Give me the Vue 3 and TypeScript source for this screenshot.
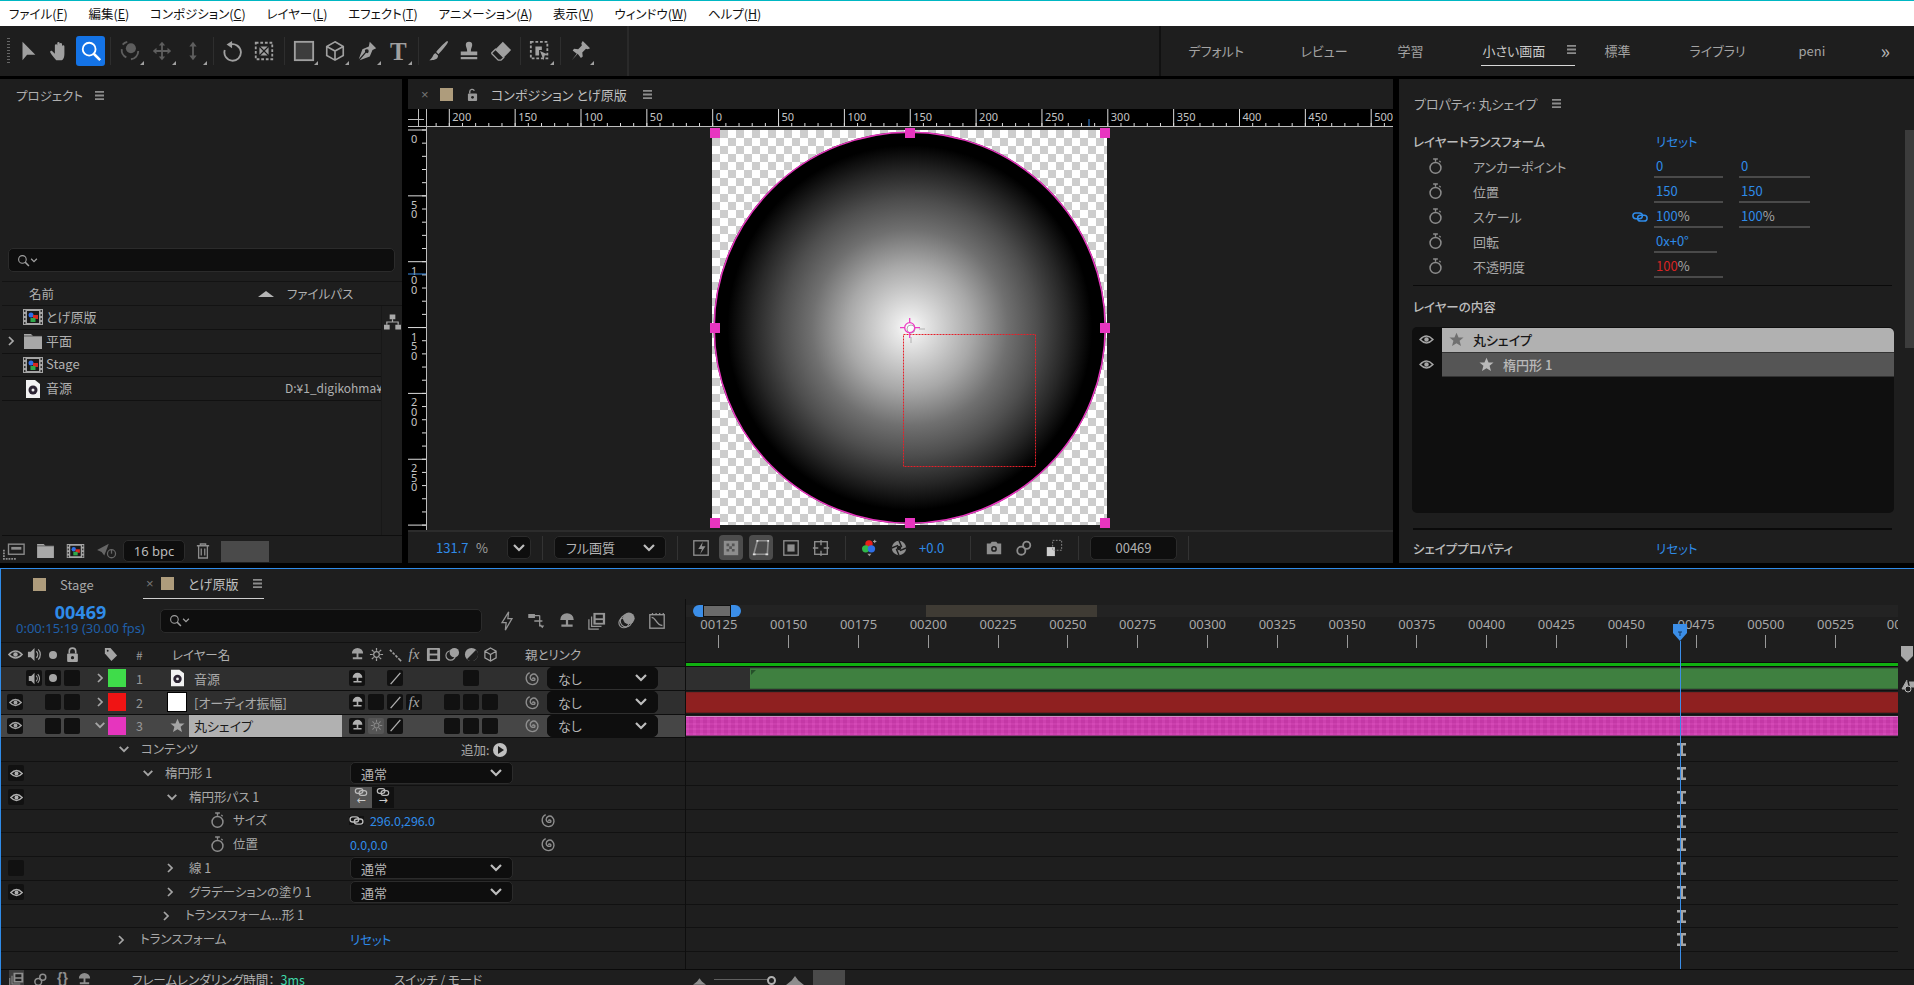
<template>
  <div class="app">
    <svg class="defs" aria-hidden="true">
      <symbol id="arrow" viewBox="0 0 24 24"><path d="M6 2v20l5-6h9z" fill="currentColor"/></symbol>
      <symbol id="hand" viewBox="0 0 24 24"><path d="M9 22c-2-2-5-6-6.500-8.500-.7-1.300 1-2.500 2.200-1.300L7.500 15V6a1.300 1.300 0 0 1 2.600 0v5V3.500a1.300 1.300 0 0 1 2.600 0V11V4.500a1.300 1.300 0 0 1 2.600 0V12V7a1.300 1.300 0 0 1 2.600 0v8c0 3-1 7-3 7z" fill="currentColor"/></symbol>
      <symbol id="search" viewBox="0 0 24 24"><circle cx="10" cy="10" r="7" fill="none" stroke="currentColor" stroke-width="2"/><path d="M15 15l7 7" stroke="currentColor" stroke-width="2.800"/></symbol>
      <symbol id="orbit" viewBox="0 0 24 24"><circle cx="13" cy="9" r="5.500" fill="currentColor"/><path d="M3 10a9 9 0 0 0 5 9M21 12a9 9 0 0 1-8 9M4 5a9 9 0 0 1 5-3" fill="none" stroke="currentColor" stroke-width="2"/></symbol>
      <symbol id="move4" viewBox="0 0 24 24"><path d="M12 2l3.500 4H13v5h5V8.500l4 3.500-4 3.500V13h-5v5h2.500L12 22l-3.500-4H11v-5H6v2.500L2 12l4-3.500V11h5V6H8.500z" fill="currentColor"/></symbol>
      <symbol id="updown" viewBox="0 0 24 24"><path d="M12 2l4 5h-3v10h3l-4 5-4-5h3V7H8z" fill="currentColor"/></symbol>
      <symbol id="undo" viewBox="0 0 24 24"><path d="M9 5a9 9 0 1 1-6 6" fill="none" stroke="currentColor" stroke-width="2"/><path d="M11 1v8L5 5z" fill="currentColor"/></symbol>
      <symbol id="pan" viewBox="0 0 24 24"><rect x="3" y="3" width="18" height="18" fill="none" stroke="currentColor" stroke-width="2" stroke-dasharray="3 2"/><path d="M8 7h8l-4 4zM8 17h8l-4-4zM7 8v8l4-4zM17 8v8l-4-4z" fill="currentColor"/></symbol>
      <symbol id="rect" viewBox="0 0 24 24"><rect x="2" y="2" width="20" height="20" fill="#3d3d3d" stroke="currentColor" stroke-width="2"/></symbol>
      <symbol id="cube" viewBox="0 0 24 24"><path d="M12 2l9 5v10l-9 5-9-5V7zM3 7l9 5 9-5M12 12v10" fill="none" stroke="currentColor" stroke-width="1.800"/></symbol>
      <symbol id="pen" viewBox="0 0 24 24"><path d="M15 2l7 7-4 2-3 7-11 4 7-8a2 2 0 1 0-1-1l-7 8 4-11 7-3z" fill="currentColor"/></symbol>
      <symbol id="brush" viewBox="0 0 24 24"><path d="M22 1c-3 2-9 8-12 12l2.500 2.500C16 12 22 5 23 2zM9.500 14.500c-3 0-2.500 5-7 7.500 5 .5 10-1 9.500-5z" fill="currentColor"/></symbol>
      <symbol id="stamp" viewBox="0 0 24 24"><path d="M8.500 5.500a3.500 3.500 0 1 1 7 0c0 2-1.500 3.500-1.500 7h7v4H3v-4h7c0-3.500-1.500-5-1.500-7zM3 18.500h18V21H3z" fill="currentColor"/></symbol>
      <symbol id="eraser" viewBox="0 0 24 24"><path d="M14 2l9 9-8 8-9-9z" fill="currentColor"/><path d="M6 10l9 9-3 3-3 0-7-7 0-1z" fill="none" stroke="currentColor" stroke-width="1.500"/></symbol>
      <symbol id="roto" viewBox="0 0 24 24"><rect x="2" y="2" width="18" height="18" fill="none" stroke="currentColor" stroke-width="2" stroke-dasharray="3 2"/><path d="M7 7h7v4h-3v6H7z" fill="currentColor"/><path d="M12 12l9 4-4 1-1 5z" fill="currentColor"/></symbol>
      <symbol id="pin" viewBox="0 0 24 24"><path d="M15 1l8 8-2.500 1-2-.5-4 4 .5 4.500-2 1.500-3.500-4.500L3 22l5.500-7L4 11.500 5.500 9.500 10 10l4-4-.5-2.500z" fill="currentColor"/></symbol>
      <symbol id="menu" viewBox="0 0 12 10"><path d="M1 0h10v2H1zM1 4h10v2H1zM1 8h10v2H1z" fill="currentColor"/></symbol>
      <symbol id="lock-open" viewBox="0 0 12 14"><path d="M3 6V4a2.600 2.600 0 0 1 5-1" fill="none" stroke="currentColor" stroke-width="1.500"/><rect x="1" y="6" width="10" height="8" rx="1" fill="currentColor"/><circle cx="6" cy="10" r="1.500" fill="#1e1e1e"/></symbol>
      <symbol id="lock" viewBox="0 0 12 14"><path d="M3 6V4a3 3 0 0 1 6 0v2" fill="none" stroke="currentColor" stroke-width="1.500"/><rect x="1" y="6" width="10" height="8" rx="1" fill="currentColor"/><circle cx="6" cy="10" r="1.500" fill="#1e1e1e"/></symbol>
      <symbol id="watch" viewBox="0 0 16 18"><path d="M5.500 1h5M8 1v3" stroke="currentColor" stroke-width="1.500"/><path d="M12 3l1.500 1.500" stroke="currentColor" stroke-width="1.300"/><circle cx="8" cy="10.500" r="5.800" fill="none" stroke="currentColor" stroke-width="1.600"/></symbol>
      <symbol id="link" viewBox="0 0 16 10"><rect x=".9" y=".9" width="9.500" height="5.800" rx="2.900" fill="none" stroke="currentColor" stroke-width="1.500"/><rect x="5.600" y="3.300" width="9.500" height="5.800" rx="2.900" fill="none" stroke="currentColor" stroke-width="1.500"/></symbol>
      <symbol id="eye" viewBox="0 0 16 12"><path d="M1 6q7-7.500 14 0q-7 7.500-14 0z" fill="none" stroke="currentColor" stroke-width="1.700"/><circle cx="8" cy="6" r="2.400" fill="currentColor"/></symbol>
      <symbol id="star" viewBox="0 0 16 16"><path d="M8 .8l2.200 5h5.300l-4.200 3.500 1.500 5.700L8 12l-4.800 3 1.500-5.700L.5 5.800h5.300z" fill="currentColor"/></symbol>
      <symbol id="right" viewBox="0 0 10 14"><path d="M2.500 2l5 5-5 5" fill="none" stroke="currentColor" stroke-width="2.200"/></symbol>
      <symbol id="down" viewBox="0 0 14 10"><path d="M2 2l5 5 5-5" fill="none" stroke="currentColor" stroke-width="2.200"/></symbol>
      <symbol id="speaker" viewBox="0 0 16 16"><path d="M1 5h3l4-4v14l-4-4H1z" fill="currentColor"/><path d="M10 4.500a5 5 0 0 1 0 7M12 2.500a8 8 0 0 1 0 11" fill="none" stroke="currentColor" stroke-width="1.300"/></symbol>
      <symbol id="tag" viewBox="0 0 16 16"><path d="M2 1h6l7 8-6 6-7-8z" fill="currentColor"/><circle cx="5" cy="4" r="1" fill="#1e1e1e"/></symbol>
      <symbol id="shy" viewBox="0 0 16 16"><path d="M2 7a6 6 0 0 1 12 0H9v4h4v2H3v-2h4V7z" fill="currentColor"/></symbol>
      <symbol id="sun" viewBox="0 0 16 16"><circle cx="8" cy="8" r="3" fill="none" stroke="currentColor" stroke-width="1.300"/><path d="M8 1v3M8 12v3M1 8h3M12 8h3M3 3l2 2M11 11l2 2M13 3l-2 2M5 11l-2 2" stroke="currentColor" stroke-width="1.300"/></symbol>
      <symbol id="slash" viewBox="0 0 16 16"><path d="M14 1L2 15" stroke="currentColor" stroke-width="1.600"/></symbol>
      <symbol id="steps" viewBox="0 0 16 16"><path d="M2 3l2 2M5 6l2 2M8 9l2 2M11 12l3 3" stroke="currentColor" stroke-width="1.700"/></symbol>
      <symbol id="film" viewBox="0 0 16 16"><rect x="1" y="1" width="14" height="14" rx="1" fill="currentColor"/><rect x="4" y="3" width="8" height="4" fill="#1e1e1e"/><rect x="4" y="9" width="8" height="4" fill="#1e1e1e"/></symbol>
      <symbol id="layers" viewBox="0 0 16 16"><circle cx="10" cy="6" r="5" fill="currentColor"/><circle cx="6" cy="9" r="5" fill="none" stroke="currentColor" stroke-width="1.200"/></symbol>
      <symbol id="half" viewBox="0 0 16 16"><circle cx="8" cy="8" r="7" fill="currentColor"/><path d="M13 3L3 13a7 7 0 0 0 10-10z" fill="#1e1e1e"/></symbol>
      <symbol id="cube2" viewBox="0 0 16 16"><path d="M8 1l6 3.500v7L8 15l-6-3.500v-7zM2 4.500L8 8l6-3.500M8 8v7" fill="none" stroke="currentColor" stroke-width="1.300"/></symbol>
      <symbol id="spiral" viewBox="0 0 16 18"><path d="M8 9.500a1.300 1.300 0 1 1 1.800 1.400 3.400 3.400 0 0 1-4.300-3 3.800 3.800 0 0 1 6.600-2.400 6 6 0 0 1-.6 9A6.800 6.800 0 0 1 1.300 9.500 7 7 0 0 1 5 2.800" fill="none" stroke="currentColor" stroke-width="1.500"/></symbol>
      <symbol id="bolt" viewBox="0 0 16 24"><path d="M10 1L2 14h5l-1 9 8-14H9z" fill="none" stroke="currentColor" stroke-width="1.500"/></symbol>
      <symbol id="tree" viewBox="0 0 20 20"><path d="M1 3h6v3H1zM7 4h6M13 4v12M7 10h9M13 15h2" stroke="currentColor" stroke-width="1.400" fill="currentColor"/><path d="M13 15h5l-2 3z" fill="currentColor"/></symbol>
      <symbol id="stack" viewBox="0 0 20 20"><rect x="6" y="1" width="13" height="13" fill="currentColor"/><rect x="8.500" y="3" width="8" height="4" fill="#1e1e1e"/><rect x="8.500" y="9" width="8" height="3" fill="#1e1e1e"/><path d="M4 5v11h11M1 8v11h11" fill="none" stroke="currentColor" stroke-width="1.400"/></symbol>
      <symbol id="motion" viewBox="0 0 20 20"><circle cx="12" cy="7" r="6.500" fill="currentColor"/><circle cx="9" cy="10" r="6.500" fill="none" stroke="currentColor" stroke-width="1.300"/><circle cx="6.500" cy="12" r="5.500" fill="none" stroke="currentColor" stroke-width="1.300"/></symbol>
      <symbol id="graph" viewBox="0 0 20 20"><rect x="2" y="3" width="16" height="15" fill="none" stroke="currentColor" stroke-width="1.500"/><path d="M4 6c5 0 5 9 12 9M5 1v2M9 1v2M13 1v2M17 1v2" fill="none" stroke="currentColor" stroke-width="1.400"/></symbol>
      <symbol id="snap" viewBox="0 0 20 20"><rect x="2" y="2" width="16" height="16" fill="none" stroke="currentColor" stroke-width="1.500"/><path d="M12 3l-5 8h4l-2 6 6-9h-4z" fill="currentColor"/></symbol>
      <symbol id="grid" viewBox="0 0 20 20"><rect x="2" y="2" width="16" height="16" fill="#8d8d8d"/><path d="M5 5h3v3H5zM11 5h3v3h-3zM8 8h3v3H8zM5 11h3v3H5zM11 11h3v3h-3z" fill="#555"/></symbol>
      <symbol id="mask" viewBox="0 0 20 20"><path d="M6 2h12l-1 15H2z" fill="none" stroke="currentColor" stroke-width="1.800"/><path d="M6 1v2M18 1v2M1 17h3M15 17h3" stroke="#ddd" stroke-width="2"/></symbol>
      <symbol id="safe" viewBox="0 0 20 20"><rect x="2" y="2" width="16" height="16" fill="none" stroke="currentColor" stroke-width="1.500"/><rect x="6" y="6" width="8" height="8" fill="currentColor"/></symbol>
      <symbol id="target" viewBox="0 0 20 20"><rect x="3" y="3" width="14" height="14" fill="none" stroke="currentColor" stroke-width="1.500"/><path d="M10 1v6M10 13v6M1 10h6M13 10h6" stroke="currentColor" stroke-width="1.500"/></symbol>
      <symbol id="rgb" viewBox="0 0 20 22"><circle cx="10" cy="6" r="4.500" fill="#e8201a"/><circle cx="6" cy="12" r="4.500" fill="#2fb84a"/><circle cx="13" cy="12" r="4.500" fill="#2f6fe8"/><path d="M15 3h4M17 1v4" stroke="#aaa" stroke-width="1.200"/><path d="M8 18h5l-2.500 3z" fill="#999"/></symbol>
      <symbol id="shutter" viewBox="0 0 20 20"><circle cx="10" cy="10" r="8" fill="currentColor"/><path d="M10 2l3 7M18 10l-7 3M10 18l-3-7M2 10l7-3" stroke="#1e1e1e" stroke-width="1.600"/><circle cx="10" cy="10" r="2.500" fill="#1e1e1e"/></symbol>
      <symbol id="camera" viewBox="0 0 20 20"><path d="M2 5h4l1.500-2h5L14 5h4v12H2z" fill="currentColor"/><circle cx="10" cy="11" r="3.200" fill="#1e1e1e"/><circle cx="10" cy="11" r="1.500" fill="currentColor"/></symbol>
      <symbol id="viewer" viewBox="0 0 20 20"><circle cx="7" cy="13" r="4.500" fill="none" stroke="currentColor" stroke-width="2"/><circle cx="13" cy="7" r="4" fill="none" stroke="currentColor" stroke-width="2"/></symbol>
      <symbol id="channel" viewBox="0 0 20 20"><rect x="2" y="9" width="9" height="10" fill="#cfcfcf"/><rect x="8.500" y="1.500" width="10" height="11" fill="none" stroke="#8d8d8d" stroke-dasharray="2 1.500"/></symbol>
      <symbol id="comp" viewBox="0 0 20 16"><rect width="20" height="16" fill="#a5a5a5"/><path d="M1 1h1.500v2H1zM1 5h1.500v2H1zM1 9h1.500v2H1zM1 13h1.500v2H1zM17.500 1H19v2h-1.500zM17.500 5H19v2h-1.500zM17.500 9H19v2h-1.500zM17.500 13H19v2h-1.500z" fill="#333"/><rect x="4" y="2" width="12" height="12" fill="#1a1a1a"/><rect x="5.500" y="3.500" width="5" height="5" rx="2.500" fill="#2f6fe8"/><rect x="10" y="6" width="5" height="4" fill="#d8281f"/><rect x="7.500" y="9" width="5" height="4" fill="#2fa84a"/></symbol>
      <symbol id="doc" viewBox="0 0 14 18"><path d="M0 0h9l5 4v14H0z" fill="#f2f2f2"/><circle cx="7" cy="10" r="4.500" fill="#2c2433"/><circle cx="7" cy="10" r="1.500" fill="#eee"/></symbol>
      <symbol id="folder" viewBox="0 0 18 15"><path d="M0 0h7l2 2h9v13H0z" fill="#a8a8a8"/><path d="M0 2h18" stroke="#333" stroke-width=".700"/></symbol>
      <symbol id="net" viewBox="0 0 18 16"><path d="M6 0h6v5H6zM0 11h6v5H0zM12 11h6v5h-6z" fill="currentColor"/><path d="M9 5v3M3 11V8h12v3" fill="none" stroke="currentColor" stroke-width="1.300"/></symbol>
      <symbol id="footage" viewBox="0 0 24 18"><rect x="6" y="1" width="17" height="11" fill="none" stroke="currentColor" stroke-width="1.500"/><rect x="9" y="4" width="11" height="3" fill="currentColor"/><path d="M1 7v10h14" fill="none" stroke="currentColor" stroke-width="2" stroke-dasharray="2 1"/></symbol>
      <symbol id="rocket" viewBox="0 0 24 20"><path d="M1 9l13-7-5 13-3-4z" fill="currentColor"/><circle cx="17" cy="13" r="4.500" fill="none" stroke="currentColor" stroke-width="1.400"/><path d="M17 8v5" stroke="currentColor" stroke-width="1.400"/></symbol>
      <symbol id="trash" viewBox="0 0 16 18"><path d="M1 3h14M5 3V1h6v2M3 3v14h10V3M6 6v8M10 6v8" fill="none" stroke="currentColor" stroke-width="1.500"/></symbol>
      <symbol id="mount" viewBox="0 0 16 8"><path d="M0 8l5-4 3-4 3 4 5 4z" fill="currentColor"/></symbol>
      <symbol id="ibeam" viewBox="0 0 9 13"><path d="M0 0h9v2.500H6V10.500h3V13H0v-2.500h3V2.500H0z" fill="currentColor"/></symbol>
    </svg>

    <div class="menubar">
      <span v-for="m in menus" :key="m.key" class="menu-item">{{ m.label }}(<u>{{ m.key }}</u>)</span>
    </div>

    <div class="toolbar">
      <span class="grip"></span>
      <template v-for="(t, i) in tools" :key="i">
        <span v-if="t.sep" class="tool-sep"></span>
        <span v-else class="tool" :class="{ active: t.active, dim: t.dim, fly: t.fly }">
          <span v-if="t.text" class="tool-t">T</span>
          <svg v-else class="tool-ic"><use :href="'#' + t.id" /></svg>
        </span>
      </template>
      <span class="tool-end"></span>
      <div class="workspaces">
        <span v-for="w in workspaces" :key="w.label" class="ws" :class="{ on: w.on }" :style="{ width: w.w + 'px' }">
          {{ w.label }}
          <svg v-if="w.on" class="ham ws-ham"><use href="#menu" /></svg>
        </span>
        <span class="ws-more">»</span>
      </div>
    </div>

    <div class="panels">
      <section class="project">
        <header class="p-head"><span>プロジェクト</span><svg class="ham"><use href="#menu" /></svg></header>
        <div class="search proj-search">
          <svg class="search-ic"><use href="#search" /></svg><svg class="search-ch"><use href="#down" /></svg>
        </div>
        <div class="proj-cols">
          <span class="col-name">名前</span>
          <span class="col-sort"></span>
          <span class="col-path">ファイルパス</span>
        </div>
        <div class="proj-list">
          <div class="proj-rows">
            <div v-for="p in projectItems" :key="p.name" class="proj-row">
              <span class="proj-chev"><svg v-if="p.chev"><use href="#right" /></svg></span>
              <span class="proj-icon"><svg :class="p.icon"><use :href="'#' + p.icon" /></svg></span>
              <span class="proj-name">{{ p.name }}</span>
              <span class="proj-path">{{ p.path }}</span>
            </div>
          </div>
          <div class="proj-side"><svg class="net"><use href="#net" /></svg></div>
        </div>
        <footer class="proj-foot">
          <svg class="pf-ic footage"><use href="#footage" /></svg>
          <svg class="pf-ic folder"><use href="#folder" /></svg>
          <svg class="pf-ic comp"><use href="#comp" /></svg>
          <svg class="pf-ic rocket"><use href="#rocket" /></svg>
          <span class="bpc">16 bpc</span>
          <svg class="pf-ic trash"><use href="#trash" /></svg>
          <span class="gray-box"></span>
        </footer>
      </section>

      <section class="viewer">
        <header class="v-head">
          <span class="x">×</span>
          <span class="swatch"></span>
          <svg class="v-lock"><use href="#lock-open" /></svg>
          <span class="v-title">コンポジション とげ原版</span>
          <svg class="ham"><use href="#menu" /></svg>
        </header>
        <div class="ruler-top">
          <div class="ruler-corner"></div>
          <svg class="ruler-h" width="966" height="18">
            <line v-for="t in hMinor" :key="t" :x1="t" :x2="t" y1="14" y2="17" stroke="#ddd" />
            <template v-for="t in hMajor" :key="t.x">
              <line :x1="t.x" :x2="t.x" y1="0" y2="17" stroke="#ddd" />
              <text :x="t.x + 3" y="12" class="ruler-text">{{ t.v }}</text>
            </template>
            <line x1="662" x2="662" y1="10" y2="17" stroke="#3b8ee8" />
            <line x1="0" x2="966" y1="17.500" y2="17.500" stroke="#bdbdbd" />
          </svg>
        </div>
        <div class="v-body">
          <svg class="ruler-v" width="19" height="403">
            <line v-for="t in vMinor" :key="t" x1="14" x2="19" :y1="t" :y2="t" stroke="#ddd" />
            <template v-for="t in vMajor" :key="t.v">
              <line x1="0" x2="19" :y1="t.y" :y2="t.y" stroke="#ddd" />
              <text v-for="(d, i) in t.digits" :key="i" x="3" :y="t.y + 13 + i * 9.600" class="ruler-text">{{ d }}</text>
            </template>
            <line x1="0" x2="19" y1="147" y2="147" stroke="#3b8ee8" />
            <line x1="18.500" x2="18.500" y1="0" y2="403" stroke="#bdbdbd" />
          </svg>
          <div class="stage">
            <div class="checker">
              <svg class="art" width="395" height="395" viewBox="0 0 395 395">
                <defs>
                  <radialGradient id="glow">
                    <stop offset="0" stop-color="#fff" />
                    <stop offset="0.07" stop-color="#e8e8e8" />
                    <stop offset="0.32" stop-color="#a8a8a8" />
                    <stop offset="0.5" stop-color="#707070" />
                    <stop offset="0.65" stop-color="#4e4e4e" />
                    <stop offset="0.8" stop-color="#262626" />
                    <stop offset="0.93" stop-color="#000" />
                  </radialGradient>
                </defs>
                <circle cx="197.700" cy="197.700" r="196" fill="url(#glow)" />
                <circle cx="197.700" cy="197.700" r="195.500" fill="none" stroke="#e635be" stroke-width="1.500" />
                <rect x="191.500" y="204.500" width="132" height="132" fill="none" stroke="#e5202a" stroke-dasharray="2 1" />
                <g fill="none" stroke="#b0b0b0">
                  <circle cx="199" cy="199" r="4" />
                  <path d="M199 207v6M207 199h6" />
                </g>
                <g fill="none" stroke="#ec3fc4" stroke-width="1.300">
                  <circle cx="197.700" cy="197.700" r="5" />
                  <path d="M197.700 188v5M197.700 203v5M188 197.700h5M203 197.700h5" />
                </g>
                <rect v-for="h in handles" :key="h.x + '-' + h.y" :x="h.x - 5" :y="h.y - 5" width="10" height="10" fill="#e835c0" />
              </svg>
            </div>
          </div>
        </div>
        <footer class="v-foot">
          <span class="zoom-val">131.7</span><span class="zoom-pct">%</span>
          <span class="drop mini"><svg class="chev"><use href="#down" /></svg></span>
          <i class="sep"></i>
          <span class="drop quality">フル画質<svg class="chev"><use href="#down" /></svg></span>
          <i class="sep"></i>
          <span class="vf-group">
            <span v-for="b in viewerBtns" :key="b.id" class="vf-btn" :class="{ on: b.on }"><svg><use :href="'#' + b.id" /></svg></span>
          </span>
          <i class="sep"></i>
          <span class="vf-group">
            <span class="vf-btn"><svg><use href="#rgb" /></svg></span>
            <span class="vf-btn"><svg><use href="#shutter" /></svg></span>
          </span>
          <span class="exposure">+0.0</span>
          <i class="sep"></i>
          <span class="vf-group">
            <span class="vf-btn"><svg><use href="#camera" /></svg></span>
            <span class="vf-btn"><svg><use href="#viewer" /></svg></span>
            <span class="vf-btn"><svg><use href="#channel" /></svg></span>
          </span>
          <i class="sep"></i>
          <span class="frame-box">00469</span>
          <i class="sep"></i>
        </footer>
      </section>

      <section class="props">
        <header class="pr-head"><span>プロパティ: 丸シェイプ</span><svg class="ham"><use href="#menu" /></svg></header>
        <div class="pr-title"><span>レイヤートランスフォーム</span><a class="reset">リセット</a></div>
        <div v-for="r in transformRows" :key="r.label" class="pr-row">
          <svg class="pr-watch"><use href="#watch" /></svg>
          <span class="pr-label">{{ r.label }}</span>
          <span class="pr-link"><svg v-if="r.link"><use href="#link" /></svg></span>
          <span class="pr-val" :class="{ short: r.short }"><em :class="{ red: r.red }">{{ r.a }}</em>{{ r.unit }}</span>
          <span v-if="r.b" class="pr-val second"><em>{{ r.b }}</em>{{ r.unit }}</span>
        </div>
        <div class="pr-div"></div>
        <div class="pr-title content-title"><span>レイヤーの内容</span></div>
        <div class="content-box">
          <div class="content-row first">
            <svg class="c-eye"><use href="#eye" /></svg>
            <div class="c-bar"><svg class="c-star"><use href="#star" /></svg><span>丸シェイプ</span></div>
          </div>
          <div class="content-row second">
            <svg class="c-eye"><use href="#eye" /></svg>
            <div class="c-bar"><svg class="c-star"><use href="#star" /></svg><span>楕円形 1</span></div>
          </div>
        </div>
        <div class="pr-div lower"></div>
        <div class="pr-title shape-title"><span>シェイププロパティ</span><a class="reset">リセット</a></div>
        <div class="pr-scroll"></div>
      </section>
    </div>

    <section class="timeline">
      <div class="tabs">
        <span class="tab stage-tab"><i class="swatch"></i>Stage</span>
        <span class="tab on"><span class="x">×</span><i class="swatch"></i><span class="tab-name">とげ原版</span><svg class="ham"><use href="#menu" /></svg></span>
      </div>
      <div class="tl-main">
        <div class="tl-left">
          <div class="time-row">
            <div class="time-code">
              <b>00469</b>
              <span>0:00:15:19 (30.00 fps)</span>
            </div>
            <div class="search tl-search">
              <svg class="search-ic"><use href="#search" /></svg><svg class="search-ch"><use href="#down" /></svg>
            </div>
            <div class="tl-tools">
              <svg v-for="id in timelineTools" :key="id"><use :href="'#' + id" /></svg>
            </div>
          </div>
          <div class="layer-grid head-row">
            <div class="av">
              <svg v-for="id in ['eye', 'speaker']" :key="id"><use :href="'#' + id" /></svg>
              <i class="dot"></i>
              <svg><use href="#lock" /></svg>
            </div>
            <div class="h-tag"><svg><use href="#tag" /></svg></div>
            <div class="h-num">#</div>
            <div class="h-name">レイヤー名</div>
            <div class="sw h-sw">
              <template v-for="id in headSwitches" :key="id">
                <span v-if="id === 'fx'" class="fx">fx</span>
                <svg v-else><use :href="'#' + id" /></svg>
              </template>
            </div>
            <div class="h-parent">親とリンク</div>
          </div>
          <div v-for="l in layers" :key="l.n" class="layer-grid layer" :class="{ sel: l.sel }">
            <div class="av">
              <span v-for="(a, i) in l.av" :key="i" class="cell" :class="{ box: a !== '' }">
                <svg v-if="a === 'eye' || a === 'speaker'"><use :href="'#' + a" /></svg>
                <i v-if="a === 'dot'" class="dot"></i>
              </span>
            </div>
            <div class="l-chev">
              <svg v-if="l.open" class="ch-d"><use href="#down" /></svg>
              <svg v-else class="ch-r"><use href="#right" /></svg>
            </div>
            <div class="l-color" :style="{ background: l.color }"></div>
            <div class="l-num">{{ l.n }}</div>
            <div class="l-name">
              <span class="l-ic">
                <svg v-if="l.icon === 'doc'" class="ic-doc"><use href="#doc" /></svg>
                <svg v-else-if="l.icon === 'star'" class="ic-star"><use href="#star" /></svg>
                <i v-else class="ic-solid"></i>
              </span>
              <span class="l-label">{{ l.name }}</span>
            </div>
            <div class="sw">
              <span v-for="(s, i) in l.sw" :key="i" class="cell" :class="{ box: s !== '', lit: s === 'sun' }">
                <span v-if="s === 'fx'" class="fx">fx</span>
                <svg v-else-if="s && s !== 'box'"><use :href="'#' + s" /></svg>
              </span>
            </div>
            <div class="l-parent">
              <svg class="whip"><use href="#spiral" /></svg>
              <span class="drop parent">なし<svg class="chev"><use href="#down" /></svg></span>
            </div>
          </div>
          <div v-for="s in subRows" :key="s.name" class="sub">
            <div class="sub-name">
              <span class="cell eye-cell" :class="{ box: s.eye || s.box }"><svg v-if="s.eye"><use href="#eye" /></svg></span>
              <span class="sub-lead" :style="{ marginLeft: s.x - 46 + 'px' }">
                <svg v-if="s.chev === 'down'" class="ch-d"><use href="#down" /></svg>
                <svg v-else-if="s.chev === 'right'" class="ch-r"><use href="#right" /></svg>
                <svg v-else-if="s.watch" class="sub-watch"><use href="#watch" /></svg>
              </span>
              <span class="sub-text">{{ s.name }}</span>
            </div>
            <div class="sub-val">
              <span v-if="s.add" class="add">追加:<i class="play"></i></span>
              <span v-if="s.mode" class="drop mode">通常<svg class="chev"><use href="#down" /></svg></span>
              <span v-if="s.toggles" class="toggles">
                <span class="tg on"><svg><use href="#link" /></svg><b>←</b></span>
                <span class="tg"><svg><use href="#link" /></svg><b>→</b></span>
              </span>
              <svg v-if="s.link" class="val-link"><use href="#link" /></svg>
              <a v-if="s.value" class="value">{{ s.value }}</a>
              <a v-if="s.reset" class="value">リセット</a>
            </div>
            <svg v-if="s.whip" class="sub-whip"><use href="#spiral" /></svg>
          </div>
          <div class="sub last"></div>
        </div>

        <div class="tl-right">
          <div class="tl-ruler">
            <div class="nav">
              <span class="nav-l"></span><span class="nav-thumb"></span><span class="nav-r"></span>
              <span class="work"></span>
            </div>
            <div class="ticks">
              <div v-for="t in ticks" :key="t" class="tick"><span>{{ t }}</span><i></i></div>
            </div>
            <div class="green"></div>
          </div>
          <div class="tracks">
            <div class="track"><div class="bar audio"></div></div>
            <div class="track"><div class="bar red"></div></div>
            <div class="track"><div class="bar pink"></div></div>
            <div v-for="s in subRows" :key="s.name" class="track empty"><svg class="key"><use href="#ibeam" /></svg></div>
          </div>
          <div class="playhead">
            <svg width="14" height="17"><path d="M0 0h14v9l-7 8-7-8z" fill="#3b8ee8" /><path d="M5 8h4M7 8v4" stroke="#15375e" /></svg>
            <i></i>
          </div>
          <div class="side">
            <svg class="side-mark" width="12" height="17"><path d="M0 0h12v10l-6 6-6-6z" fill="#a8a8a8" /></svg>
            <svg class="side-ic" width="14" height="14"><path d="M6 1L1 10h7M8 3h6v5H9" fill="#a8a8a8" stroke="#a8a8a8" /><circle cx="7" cy="10" r="3" fill="#1e1e1e" stroke="#bbb" /></svg>
          </div>
        </div>
      </div>
      <footer class="tl-foot">
        <div class="tf-icons">
          <span class="tf-on"><svg><use href="#stack" /></svg></span>
          <svg><use href="#viewer" /></svg>
          <b class="braces">{}</b>
          <svg><use href="#shy" /></svg>
        </div>
        <span class="tf-render">フレームレンダリング時間：<em>3ms</em></span>
        <span class="tf-mode">スイッチ / モード</span>
        <svg class="mount small"><use href="#mount" /></svg>
        <span class="slider"><i></i></span>
        <svg class="mount big"><use href="#mount" /></svg>
        <span class="tf-box"></span>
      </footer>
    </section>
  </div>
</template>

<script setup lang="ts">
interface SubRow {
  name: string;
  x: number;
  chev?: 'down' | 'right';
  watch?: boolean;
  eye?: boolean;
  box?: boolean;
  mode?: boolean;
  add?: boolean;
  toggles?: boolean;
  link?: boolean;
  value?: string;
  whip?: boolean;
  reset?: boolean;
}

const menus = [
  { label: 'ファイル', key: 'F' },
  { label: '編集', key: 'E' },
  { label: 'コンポジション', key: 'C' },
  { label: 'レイヤー', key: 'L' },
  { label: 'エフェクト', key: 'T' },
  { label: 'アニメーション', key: 'A' },
  { label: '表示', key: 'V' },
  { label: 'ウィンドウ', key: 'W' },
  { label: 'ヘルプ', key: 'H' },
];

const tools: { id?: string; sep?: boolean; active?: boolean; dim?: boolean; fly?: boolean; text?: boolean }[] = [
  { id: 'arrow' },
  { id: 'hand' },
  { id: 'search', active: true },
  { sep: true },
  { id: 'orbit', dim: true, fly: true },
  { id: 'move4', dim: true, fly: true },
  { id: 'updown', dim: true, fly: true },
  { sep: true },
  { id: 'undo' },
  { id: 'pan' },
  { sep: true },
  { id: 'rect', fly: true },
  { id: 'cube', fly: true },
  { id: 'pen', fly: true },
  { text: true, fly: true },
  { sep: true },
  { id: 'brush' },
  { id: 'stamp' },
  { id: 'eraser' },
  { sep: true },
  { id: 'roto', fly: true },
  { sep: true },
  { id: 'pin', fly: true },
];

const workspaces = [
  { label: 'デフォルト', w: 112 },
  { label: 'レビュー', w: 97 },
  { label: '学習', w: 85 },
  { label: '小さい画面', w: 122, on: true },
  { label: '標準', w: 85 },
  { label: 'ライブラリ', w: 109 },
  { label: 'peni', w: 82 },
];

const projectItems = [
  { name: 'とげ原版', icon: 'comp' },
  { name: '平面', icon: 'folder', chev: true },
  { name: 'Stage', icon: 'comp' },
  { name: '音源', icon: 'doc', path: 'D:¥1_digikohma¥' },
];

// viewer rulers: 1.317 px per comp pixel, origin at the canvas corner
const unit = 65.85;
const hOrigin = 285.7;
const hMajor = Array.from({ length: 15 }, (_, i) => {
  const v = (i - 4) * 50;
  return { v: Math.abs(v), x: hOrigin + (i - 4) * unit };
}).filter((t) => t.x > 0 && t.x < 966);
const hMinor = Array.from({ length: 75 }, (_, i) => hOrigin + (i - 22) * (unit / 5)).filter((x) => x > 0 && x < 966);
const vMajor = [0, 50, 100, 150, 200, 250, 300].map((v, i) => ({
  v,
  y: 3 + i * unit,
  digits: String(v).split(''),
}));
const vMinor = Array.from({ length: 32 }, (_, i) => 3 + i * (unit / 5));

const handles = [
  { x: 3, y: 3 },
  { x: 198, y: 3 },
  { x: 393, y: 3 },
  { x: 3, y: 198 },
  { x: 393, y: 198 },
  { x: 3, y: 393 },
  { x: 198, y: 393 },
  { x: 393, y: 393 },
];

const viewerBtns = [
  { id: 'snap' },
  { id: 'grid', on: true },
  { id: 'mask', on: true },
  { id: 'safe' },
  { id: 'target' },
];

const transformRows = [
  { label: 'アンカーポイント', a: '0', b: '0', unit: '' },
  { label: '位置', a: '150', b: '150', unit: '' },
  { label: 'スケール', a: '100', b: '100', unit: '%', link: true },
  { label: '回転', a: '0x+0°', unit: '', short: true },
  { label: '不透明度', a: '100', unit: '%', red: true },
];

const timelineTools = ['bolt', 'tree', 'shy', 'stack', 'motion', 'graph'];
const headSwitches = ['shy', 'sun', 'steps', 'fx', 'film', 'layers', 'half', 'cube2'];

const layers = [
  {
    n: 1,
    color: '#3fdc4a',
    name: '音源',
    icon: 'doc',
    av: ['', 'speaker', 'dot', 'box'],
    sw: ['shy', '', 'slash', '', '', '', 'box', ''],
  },
  {
    n: 2,
    color: '#f01414',
    name: '[オーディオ振幅]',
    icon: 'solid',
    av: ['eye', '', 'box', 'box'],
    sw: ['shy', 'box', 'slash', 'fx', '', 'box', 'box', 'box'],
  },
  {
    n: 3,
    color: '#e635be',
    name: '丸シェイプ',
    icon: 'star',
    open: true,
    sel: true,
    av: ['eye', '', 'box', 'box'],
    sw: ['shy', 'sun', 'slash', '', '', 'box', 'box', 'box'],
  },
];

const subRows: SubRow[] = [
  { name: 'コンテンツ', x: 140, chev: 'down', add: true },
  { name: '楕円形 1', x: 164, chev: 'down', eye: true, mode: true },
  { name: '楕円形パス 1', x: 188, chev: 'down', eye: true, toggles: true },
  { name: 'サイズ', x: 232, watch: true, link: true, value: '296.0,296.0', whip: true },
  { name: '位置', x: 232, watch: true, value: '0.0,0.0', whip: true },
  { name: '線 1', x: 188, chev: 'right', box: true, mode: true },
  { name: 'グラデーションの塗り 1', x: 188, chev: 'right', eye: true, mode: true },
  { name: 'トランスフォーム...形 1', x: 184, chev: 'right' },
  { name: 'トランスフォーム', x: 139, chev: 'right', reset: true },
];

const ticks = Array.from({ length: 18 }, (_, i) => String(125 + i * 25).padStart(5, '0'));
</script>

<style scoped>
.app {
  width: 1914px;
  height: 985px;
  overflow: hidden;
  background: #000;
  border-top: 1px solid #00b7c3;
  box-sizing: border-box;
  font-family: "Noto Sans CJK JP", "Noto Sans", sans-serif;
  font-feature-settings: "palt";
  font-size: 12px;
  color: #b0b0b0;
  display: flex;
  flex-direction: column;
}
.defs { display: none; }
svg { display: block; flex-shrink: 0; }
em { font-style: normal; }
a { color: #2f8be8; }

.menubar {
  height: 25px;
  background: #fff;
  color: #111;
  display: flex;
  align-items: center;
  padding-left: 9px;
  gap: 20.75px;
  flex-shrink: 0;
  font-size: 12.5px;
}

.toolbar {
  height: 50px;
  margin-bottom: 3px;
  background: #1e1e1e;
  display: flex;
  align-items: center;
  flex-shrink: 0;
}
.grip {
  width: 3px;
  height: 26px;
  margin: 0 2.5px 0 6.5px;
  background: repeating-linear-gradient(#666 0 1px, transparent 1px 3px);
}
.tool {
  width: 31.5px;
  height: 30px;
  display: flex;
  align-items: center;
  justify-content: center;
  color: #a0a0a0;
  position: relative;
  border-radius: 3px;
}
.tool.dim { color: #5e5e5e; }
.tool.active { background: #1473e6; color: #fff; width: 29px; margin: 0 1.25px; }
.tool.fly::after {
  content: "";
  position: absolute;
  right: 2px;
  bottom: 1px;
  border-left: 4px solid transparent;
  border-bottom: 4px solid #a0a0a0;
}
.tool-ic { width: 22px; height: 22px; }
.tool-t {
  font-family: "Liberation Serif", serif;
  font-size: 25px;
  font-weight: 700;
  line-height: 1;
}
.tool-sep { width: 1px; height: 28px; margin: 0 3.5px; background: #2e2e2e; }
.tool-end { width: 2px; height: 50px; margin-left: 31px; background: #2a2a2a; }
.workspaces {
  display: flex;
  align-items: center;
  height: 50px;
  margin-left: 530px;
  border-left: 2px solid #111;
  padding-left: 28px;
}
.ws {
  flex-shrink: 0;
  font-size: 13px;
  color: #a3a3a3;
  line-height: 22px;
  position: relative;
}
.ws.on { color: #c8c8c8; }
.ws.on::after {
  content: "";
  position: absolute;
  left: -2px;
  width: 94px;
  bottom: -4px;
  height: 1px;
  background: #d8d8d8;
}
.ws-ham { position: absolute; left: 83px; top: 5px; }
.ws-more { font-size: 20px; line-height: 20px; color: #b5b5b5; }

.ham { width: 11px; height: 9px; color: #8c8c8c; }

.panels {
  height: 484px;
  display: flex;
  gap: 6px;
  flex-shrink: 0;
}
.project { width: 402px; background: #1e1e1e; display: flex; flex-direction: column; }
.p-head {
  height: 32px;
  display: flex;
  align-items: center;
  padding-left: 16px;
  gap: 11px;
  flex-shrink: 0;
  font-size: 12.5px;
}
.search {
  background: #0e0e0e;
  border: 1px solid #2b2b2b;
  border-radius: 5px;
  box-sizing: border-box;
  display: flex;
  align-items: center;
  padding-left: 8px;
}
.search-ic { width: 13px; height: 13px; color: #a0a0a0; }
.search-ch { width: 8px; height: 7px; color: #a0a0a0; }
.proj-search { height: 24px; margin: 137px 7px 0 8px; flex-shrink: 0; }
.proj-cols {
  height: 23px;
  margin: 9px 0 0 2px;
  border-top: 1px solid #131313;
  border-bottom: 1px solid #131313;
  display: flex;
  align-items: center;
  flex-shrink: 0;
  font-size: 12.5px;
}
.col-name { margin-left: 27px; width: 221px; }
.col-sort {
  width: 0;
  height: 0;
  border-left: 8px solid transparent;
  border-right: 8px solid transparent;
  border-bottom: 6px solid #b5b5b5;
  margin-left: 8px;
}
.col-path { margin-left: 13px; }
.proj-list { display: flex; height: 229px; flex-shrink: 0; margin-left: 2px; }
.proj-rows { width: 379px; border-right: 1px solid #181818; }
.proj-row {
  height: 23.8px;
  box-sizing: border-box;
  border-bottom: 1px solid #111;
  display: grid;
  grid-template-columns: 18px 26px 239px 1fr;
  align-items: center;
  overflow: hidden;
}
.proj-chev { display: flex; justify-content: center; color: #aaa; }
.proj-chev svg { width: 8px; height: 12px; }
.proj-icon { display: flex; justify-content: center; align-items: center; }
.proj-icon .comp { width: 20px; height: 16px; }
.proj-icon .doc { width: 14px; height: 18px; }
.proj-icon .folder { width: 18px; height: 15px; }
.proj-name { font-size: 13px; padding-bottom: 2px; }
.proj-path { white-space: nowrap; font-size: 12px; padding-bottom: 2px; }
.proj-side { padding: 8px 0 0 2px; }
.net { width: 17px; height: 16px; color: #a9a9a9; }
.proj-foot {
  height: 30px;
  margin-left: 2px;
  border-top: 1px solid #0e0e0e;
  display: flex;
  align-items: center;
  flex-shrink: 0;
  color: #8c8c8c;
}
.pf-ic.footage { width: 22px; height: 17px; margin-left: 1px; }
.pf-ic.folder { width: 17px; height: 14px; margin-left: 12px; }
.pf-ic.comp { width: 19px; height: 14px; margin-left: 12px; }
.pf-ic.rocket { width: 22px; height: 18px; margin-left: 11px; color: #666; }
.bpc {
  width: 62px;
  height: 22px;
  margin-left: 5px;
  border: 1px solid #2b2b2b;
  border-radius: 5px;
  box-sizing: border-box;
  background: #0e0e0e;
  color: #bbb;
  font-family: "Noto Sans", sans-serif;
  font-size: 13px;
  text-align: center;
  line-height: 20px;
}
.pf-ic.trash { width: 14px; height: 16px; margin-left: 11px; }
.gray-box { width: 48px; height: 21px; margin-left: 11px; background: #4a4a4a; }

.viewer { width: 985px; background: #1e1e1e; display: flex; flex-direction: column; }
.v-head { height: 30px; display: flex; align-items: center; flex-shrink: 0; padding-left: 13px; }
.x { font-size: 13px; color: #777; width: 19px; font-family: "Liberation Sans", sans-serif; }
.swatch { display: block; width: 13px; height: 13px; background: #ae9c7c; flex-shrink: 0; }
.v-lock { width: 11px; height: 13px; color: #9a9a9a; margin-left: 14px; }
.v-title { margin-left: 13px; font-size: 13px; color: #c0c0c0; margin-right: 15px; }
.ruler-top { height: 18px; display: flex; flex-shrink: 0; background: #000; }
.ruler-corner {
  width: 19px;
  box-sizing: border-box;
  border-bottom: 1px solid #bdbdbd;
  border-right: 1px solid #bdbdbd;
  background:
    linear-gradient(#bdbdbd, #bdbdbd) 0 10px / 16px 1px no-repeat,
    linear-gradient(#bdbdbd, #bdbdbd) 10px 0 / 1px 17px no-repeat;
}
.ruler-text { font-size: 11px; fill: #c4c4c4; font-family: "Noto Sans", sans-serif; }
.v-body { height: 403px; display: flex; flex-shrink: 0; overflow: hidden; }
.ruler-v { background: #000; }
.stage { padding: 3px 0 0 285px; }
.checker {
  width: 395px;
  height: 395px;
  position: relative;
  background: repeating-conic-gradient(#cdcdcd 0 25%, #fff 0 50%) 0 0 / 16px 16px;
}
.art { position: absolute; inset: 0; overflow: visible; }
.v-foot {
  height: 33px;
  border-top: 2px solid #2c2c2c;
  box-sizing: border-box;
  display: flex;
  align-items: center;
  flex-shrink: 0;
  padding-left: 28px;
}
.zoom-val { color: #2f8be8; width: 40px; font-size: 13px; }
.zoom-pct { width: 31px; font-size: 13px; color: #a0a0a0; }
.drop {
  display: flex;
  align-items: center;
  justify-content: space-between;
  height: 23px;
  box-sizing: border-box;
  background: #0e0e0e;
  border: 1px solid #2b2b2b;
  border-radius: 5px;
  color: #b4b4b4;
  padding-right: 9px;
}
.chev { width: 14px; height: 10px; color: #bdbdbd; }
.drop.mini { width: 24px; padding: 0 4px; }
.drop.quality { width: 112px; padding-left: 11px; font-size: 13px; }
.sep { display: block; width: 1px; height: 24px; margin: 0 11px; background: #333; flex-shrink: 0; }
.vf-group { display: flex; margin: 0 -2px 0 -3px; }
.vf-btn {
  width: 30px;
  height: 25px;
  display: flex;
  align-items: center;
  justify-content: center;
  color: #8e8e8e;
  border-radius: 4px;
}
.vf-btn.on { background: #4c4c4c; width: 24px; margin: 0 3px; }
.vf-btn svg { width: 18px; height: 18px; }
.exposure { color: #2f8be8; margin: 0 14px 0 7px; font-size: 13px; width: 26px; }
.frame-box {
  width: 87px;
  height: 24px;
  border: 1px solid #2b2b2b;
  border-radius: 5px;
  box-sizing: border-box;
  background: #0e0e0e;
  text-align: center;
  line-height: 22px;
  font-size: 13px;
  flex-shrink: 0;
}

.props { width: 515px; background: #1e1e1e; position: relative; overflow: hidden; padding-left: 15px; box-sizing: border-box; }
.pr-head { height: 49px; display: flex; align-items: center; gap: 13px; font-size: 13px; }
.pr-title {
  height: 26px;
  display: grid;
  grid-template-columns: 243px 1fr;
  align-items: center;
  font-size: 12.5px;
  margin-left: -1px;
  font-weight: 500;
  color: #bcbcbc;
}
.reset { font-weight: 400; font-size: 12.5px; }
.pr-row {
  height: 25px;
  display: grid;
  grid-template-columns: 59px 159px 22px 85px 71px;
  align-items: center;
  font-size: 13px;
}
.pr-watch { width: 15px; height: 17px; margin-left: 14px; color: #8c8c8c; }
.pr-label { color: #a8a8a8; }
.pr-link svg { width: 16px; height: 10px; color: #2f8be8; }
.pr-val {
  width: 69px;
  padding-left: 2px;
  box-sizing: border-box;
  height: 22px;
  border-bottom: 2px solid #4a4a4a;
  color: #a8a8a8;
  font-size: 13px;
  line-height: 20px;
}
.pr-val em { color: #2f8be8; }
.pr-val em.red { color: #d62424; }
.pr-val.short { width: 63px; }
.pr-val.second { width: 71px; }
.pr-div { height: 1px; background: #0a0a0a; margin: 6px 6px 0 -1px; width: 479px; }
.content-title { height: 41px; }
.content-box {
  width: 482px;
  height: 186px;
  margin-left: -2px;
  background: #0f0f0f;
  border-radius: 5px;
  padding-top: 1px;
  box-sizing: border-box;
}
.content-row { height: 24.5px; display: flex; }
.c-eye { width: 15px; height: 11px; margin: 6px 7px 0 7px; color: #a5a5a5; }
.c-bar { width: 452px; margin-left: 1px; display: flex; align-items: center; box-sizing: border-box; border-bottom: 1px solid #333; font-weight: 500; font-size: 13px; }
.first .c-bar { background: #b1b1b1; color: #161616; border-radius: 0 5px 0 0; padding-left: 7px; }
.first .c-star { color: #707070; width: 15px; height: 15px; margin-right: 9px; }
.second .c-bar { background: #555; color: #b9b9b9; padding-left: 37px; }
.second .c-star { color: #b9b9b9; width: 15px; height: 15px; margin-right: 9px; }
.pr-div.lower { margin-top: 15px; height: 2px; }
.shape-title { height: 36px; }
.pr-scroll { position: absolute; right: 0; top: 51px; width: 9px; height: 218px; background: #3c3c3c; }

.timeline {
  margin-top: 5px;
  height: 417px;
  background: #1e1e1e;
  border-top: 1px solid #2f8be8;
  border-left: 1px solid #2f8be8;
  box-sizing: border-box;
  display: flex;
  flex-direction: column;
  flex-shrink: 0;
}
.tabs { height: 30px; display: flex; flex-shrink: 0; font-size: 13px; align-items: center; }
.tab { display: flex; align-items: center; height: 30px; color: #a8a8a8; }
.stage-tab { margin-left: 32px; width: 110px; }
.stage-tab .swatch { margin-right: 14px; }
.tab.on { width: 121px; box-sizing: border-box; padding-left: 3px; border-bottom: 1px solid #cfcfcf; }
.tab.on .x { width: 15px; }
.tab-name { margin: 0 14px; color: #c0c0c0; }
.tl-main { display: flex; height: 370px; flex-shrink: 0; }
.tl-left { width: 684px; flex-shrink: 0; }
.time-row { height: 44px; display: flex; align-items: center; border-bottom: 1px solid #111; box-sizing: border-box; }
.time-code { width: 159px; display: flex; flex-direction: column; align-items: center; line-height: 14px; }
.time-code b { font-family: "Noto Sans", sans-serif; font-size: 18px; font-weight: 700; color: #2f8be8; line-height: 18px; margin-top: -3px; }
.time-code span { font-family: "Noto Sans", sans-serif; font-size: 13px; color: #1f5fa8; line-height: 15px; }
.tl-search { width: 322px; height: 24px; }
.tl-tools { display: flex; margin-left: 16px; gap: 12px; color: #959595; }
.tl-tools svg { width: 18px; height: 20px; }

.layer-grid {
  display: grid;
  grid-template-columns: 91px 16px 18px 39px 177px 175px 146px;
  align-items: center;
  height: 23.75px;
  box-sizing: border-box;
  border-bottom: 1px solid #0e0e0e;
}
.head-row { height: 24px; }
.av { display: grid; grid-template-columns: repeat(4, 16px); gap: 3px; padding-left: 6px; justify-items: center; align-items: center; height: 100%; }
.av svg { width: 15px; height: 15px; color: #a5a5a5; }
.dot { display: block; width: 8px; height: 8px; border-radius: 50%; background: #a5a5a5; }
.cell { display: flex; width: 16px; height: 16px; align-items: center; justify-content: center; border-radius: 2px; color: #b0b0b0; }
.cell.box { background: #111; }
.cell svg { width: 13px; height: 13px; }
.h-tag { grid-column: 2 / span 2; display: flex; justify-content: center; padding-left: 2px; color: #a5a5a5; }
.h-tag svg { width: 15px; height: 15px; }
.h-num { color: #999; padding-left: 10px; }
.h-name { padding-left: 7px; font-size: 12.5px; color: #b0b0b0; }
.sw { display: grid; grid-template-columns: repeat(8, 16px); gap: 3px; padding-left: 7px; align-items: center; justify-items: center; }
.h-sw svg { width: 15px; height: 15px; color: #a0a0a0; }
.fx { font-family: "Liberation Serif", serif; font-style: italic; font-size: 15px; line-height: 15px; color: #a8a8a8; }
.h-parent { padding-left: 8px; font-size: 12.5px; }
.layer { background: #2f2f2f; }
.layer.sel { background: #464646; }
.l-chev { display: flex; justify-content: center; color: #a5a5a5; }
.ch-r { width: 8px; height: 12px; color: #a5a5a5; }
.ch-d { width: 12px; height: 9px; color: #a5a5a5; }
.l-color { height: 18px; }
.l-num { color: #969696; padding-left: 10px; font-size: 12.5px; }
.l-name { display: flex; align-items: stretch; height: 100%; }
.l-ic { width: 24px; display: flex; align-items: center; justify-content: center; flex-shrink: 0; }
.ic-doc { width: 13px; height: 18px; }
.ic-star { width: 15px; height: 15px; color: #a5a5a5; }
.ic-solid { display: block; width: 18px; height: 18px; background: #fff; border: 1px solid #000; }
.l-label { flex: 1; display: flex; align-items: center; padding-left: 5px; font-size: 13px; color: #aaa; }
.sel .l-label { background: #b1b1b1; color: #1a1a1a; }
.cell.lit { background: #555; color: #888; }
.l-parent { display: flex; align-items: center; padding-left: 8px; }
.whip { width: 15px; height: 17px; color: #8e8e8e; margin-right: 7px; }
.drop.parent { width: 111px; height: 22px; padding-left: 10px; border-color: #0e0e0e; font-size: 13px; }

.sub { height: 23.75px; box-sizing: border-box; border-bottom: 1px solid #111; display: flex; align-items: center; font-size: 12.5px; color: #a8a8a8; }
.sub.last { height: 17px; border-bottom: 0; }
.sub-name { width: 348px; display: flex; align-items: center; flex-shrink: 0; height: 100%; }
.eye-cell { margin-left: 7px; flex-shrink: 0; }
.sub-lead { width: 23px; display: flex; align-items: center; flex-shrink: 0; }
.sub-watch { width: 15px; height: 17px; color: #8c8c8c; }
.sub-text { white-space: nowrap; padding-bottom: 2px; }
.sub-val { width: 192px; flex-shrink: 0; display: flex; align-items: center; height: 100%; }
.add { margin-left: 112px; display: flex; align-items: center; gap: 4px; white-space: nowrap; }
.play { display: block; width: 14px; height: 14px; border-radius: 50%; background: #c0c0c0; position: relative; }
.play::after { content: ""; position: absolute; left: 5px; top: 3px; border-left: 6px solid #1e1e1e; border-top: 4px solid transparent; border-bottom: 4px solid transparent; }
.drop.mode { width: 163px; height: 22px; margin-left: 1px; padding-left: 10px; font-size: 13px; }
.toggles { display: flex; margin-left: 1px; }
.tg { width: 22px; height: 21px; background: #111; display: flex; flex-direction: column; align-items: center; overflow: hidden; }
.tg.on { background: #555; }
.tg svg { width: 16px; height: 8px; margin-top: 1px; color: #bbb; }
.tg b { font-size: 11px; line-height: 10px; color: #ccc; font-weight: 400; font-family: "DejaVu Sans", sans-serif; }
.val-link { width: 15px; height: 9px; margin-right: 6px; color: #bbb; background: #111; }
.value { font-size: 12.5px; letter-spacing: -0.1px; }
.sub-val .value:first-child { margin-left: 1px; }
.sub-whip { width: 15px; height: 17px; color: #8e8e8e; }

.tl-right { flex: 1; min-width: 0; position: relative; border-left: 1px solid #0e0e0e; overflow: hidden; }
.tl-ruler { height: 68px; box-sizing: border-box; padding-top: 6px; position: relative; }
.nav { height: 12px; display: flex; background: #232323; width: 1212px; position: relative; }
.nav-l, .nav-r { width: 10px; height: 12px; background: #3b8ee8; }
.nav-l { margin-left: 7px; border-radius: 6px 0 0 6px; }
.nav-r { border-radius: 0 6px 6px 0; }
.nav-thumb { width: 28px; height: 12px; background: #6a6a6a; box-sizing: border-box; border: 1px solid #111; }
.work { position: absolute; left: 240px; width: 171px; height: 12px; background: #3f3b34; }
.ticks { display: flex; margin-left: -2px; width: 1214px; overflow: hidden; height: 31px; }
.tick { width: 69.8px; flex-shrink: 0; display: flex; flex-direction: column; align-items: center; }
.tick span { font-family: "Noto Sans", sans-serif; font-size: 13px; line-height: 14px; color: #a8a8a8; }
.tick i { display: block; width: 1px; height: 13px; margin-top: 4px; background: #999; }
.green { position: absolute; left: 0; bottom: 0; width: 1212px; height: 5px; background: #10b010; border-top: 1px solid #0c0c0c; border-bottom: 1px solid #0c0c0c; box-sizing: border-box; }
.track { height: 23.75px; width: 1212px; box-sizing: border-box; border-bottom: 1px solid #111; position: relative; padding: 1px 0; }
.track:first-child { background: #2f2f2f; }
.bar { height: 100%; box-sizing: border-box; }
.bar.audio { margin-left: 64px; background: #3f8040; border-top: 1px solid #356b36; border-bottom: 1px solid #356b36; position: relative; }
.bar.audio::before { content: ""; position: absolute; left: 1px; top: 1px; border-top: 5px solid #25502a; border-right: 5px solid transparent; }
.bar.red { background: #8f2020; border-top: 1px solid #7a2020; border-bottom: 1px solid #6f1b1b; }
.bar.pink {
  background:
    repeating-linear-gradient(90deg, rgba(255, 255, 255, 0.035) 0 3px, rgba(0, 0, 0, 0.035) 3px 7px),
    repeating-linear-gradient(0deg, rgba(255, 255, 255, 0.03) 0 2px, rgba(0, 0, 0, 0.03) 2px 5px),
    #d23cb2;
  border-top: 1px solid #d48cc6;
  border-bottom: 1px solid #8e3b7c;
}
.key { position: absolute; left: 991px; top: 5px; width: 9px; height: 13px; color: #a5a5a5; }
.playhead { position: absolute; left: 987px; top: 25px; width: 14px; height: 345px; display: flex; flex-direction: column; align-items: center; }
.playhead i { display: block; width: 1px; flex: 1; background: #3b8ee8; }
.side { position: absolute; left: 1215px; top: 47px; }
.side-ic { margin-top: 16px; }

.tl-foot { height: 16px; display: flex; align-items: flex-start; border-top: 1px solid #0a0a0a; box-sizing: border-box; flex-shrink: 0; overflow: hidden; font-size: 12.5px; line-height: 15px; }
.tf-icons { display: flex; width: 131px; padding-left: 8px; gap: 9px; box-sizing: border-box; color: #8e8e8e; }
.tf-icons svg { width: 15px; height: 15px; margin-top: 2px; }
.tf-on { display: block; background: #3d3d3d; height: 16px; }
.braces { font-size: 14px; line-height: 16px; font-weight: 700; font-family: "Liberation Sans", sans-serif; }
.tf-render { width: 262px; padding-top: 2px; flex-shrink: 0; white-space: nowrap; }
.tf-render em { color: #3fd8a8; margin-left: 6px; }
.tf-mode { width: 299px; padding-top: 2px; flex-shrink: 0; white-space: nowrap; }
.mount { width: 13px; height: 7px; color: #8e8e8e; margin-top: 8px; }
.mount.big { width: 18px; height: 9px; margin-top: 6px; margin-left: 10px; }
.slider { width: 62px; margin-left: 8px; height: 15px; position: relative; }
.slider::before { content: ""; position: absolute; left: 0; right: 8px; top: 9px; height: 1px; background: #5f5f5f; }
.slider i { position: absolute; right: 0; top: 6px; width: 9px; height: 9px; border: 2px solid #b0b0b0; border-radius: 50%; box-sizing: border-box; }
.tf-box { width: 32px; height: 15px; margin-left: 9px; background: #4a4a4a; }
</style>

<style>
html, body { margin: 0; background: #000; }
</style>
